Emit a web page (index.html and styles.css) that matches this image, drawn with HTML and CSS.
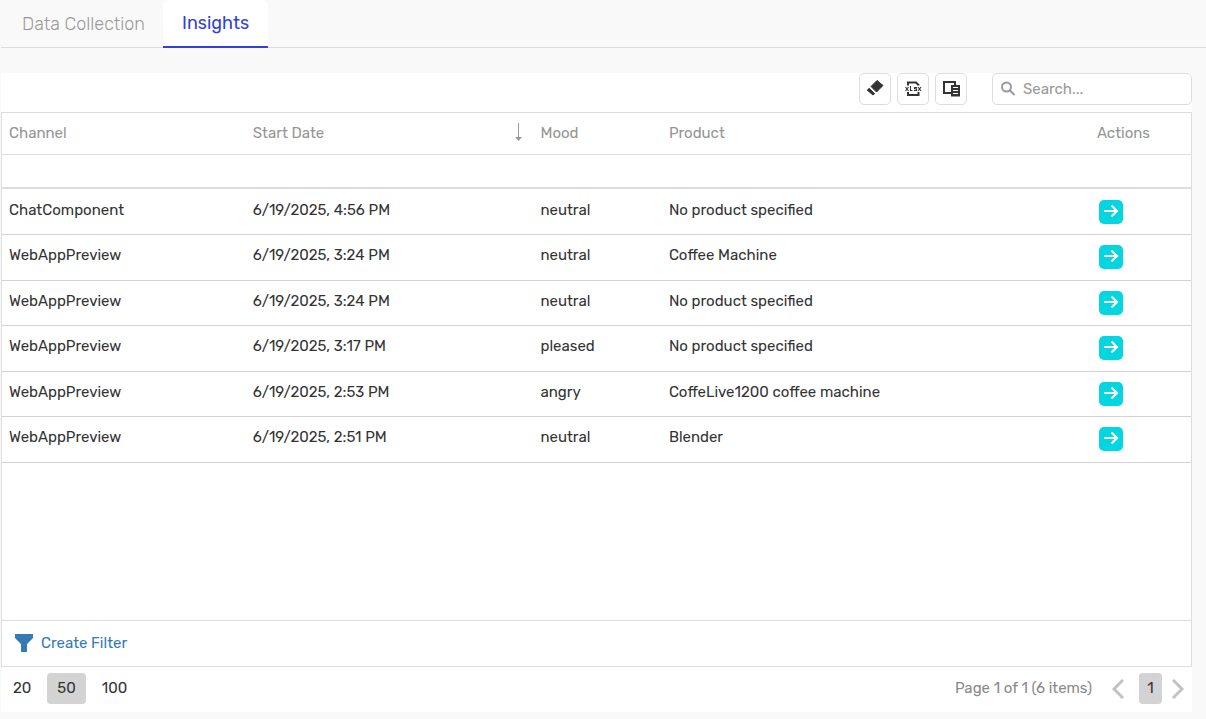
FILE: index.html
```html
<!DOCTYPE html>
<html lang="en">
<head>
<meta charset="utf-8">
<title>Insights</title>
<link rel="stylesheet" href="styles.css">
</head>
<body>
<svg class="defs" aria-hidden="true">
  <symbol id="arrow" viewBox="0 0 24 24"><path d="M5 11h13M12.500 5.500l5.500 5.500-5.500 5.500" fill="none" stroke="#fff" stroke-width="2.200"/></symbol>
</svg>
<nav class="tabs" role="tablist">
  <button class="tab" role="tab" aria-selected="false">Data Collection</button>
  <button class="tab tab-active" role="tab" aria-selected="true">Insights</button>
</nav>
<main class="card">
  <div class="toolbar">
    <button class="tool" aria-label="Clear filters"><svg width="18" height="18" viewBox="0 0 18 18" fill="#333" stroke="#333" stroke-linejoin="round"><path d="M11 0.500 17 5.500 10.500 12 5 6.500z"/><path d="M3.200 8.300 8.600 13.700 7 15 1.200 10.200z"/></svg></button>
    <button class="tool" aria-label="Export to XLSX"><svg width="18" height="18" viewBox="0 0 18 18" fill="none" stroke="#333"><path d="M4 5.500V2.500h8L14.500 5V5.500M4 12v3h10.500v-3" stroke-width="2"/><path d="M1.500 7l3 4M4.500 7l-3 4M6.500 6v4.500h2M13 7.500H10.500v1.300h2v1.700H10M14 7l3 4M17 7l-3 4" stroke-width="1.100"/></svg></button>
    <button class="tool" aria-label="Column chooser"><svg width="18" height="18" viewBox="0 0 18 18"><path d="M2 2h11v11H2z" fill="none" stroke="#333" stroke-width="2"/><path d="M9 5h9v11.500H9z" fill="#333"/><path d="M11 7.500h5M11 10.500h5M11 13.500h5" stroke="#fff"/></svg></button>
    <label class="search"><svg width="16" height="16" viewBox="0 0 16 16" fill="none" stroke="#999" stroke-width="2"><circle cx="6.500" cy="6" r="4.500"/><path d="M9.800 9.300 14.500 14"/></svg><input type="search" aria-label="Search" placeholder="Search..."></label>
  </div>
  <section class="grid">
    <div class="grid-body">
      <table>
        <colgroup><col class="c-channel"><col class="c-date"><col class="c-mood"><col class="c-product"><col class="c-actions"></colgroup>
        <thead>
          <tr class="head"><th>Channel</th><th aria-sort="descending"><div class="sorted">Start Date<svg width="9" height="20" viewBox="0 0 9 20"><path d="M4.500 0v15" stroke="#999" fill="none"/><path d="M1 14h7l-3.500 4z" fill="#999"/></svg></div></th><th>Mood</th><th>Product</th><th>Actions</th></tr>
          <tr class="filters"><td></td><td></td><td></td><td></td><td></td></tr>
        </thead>
        <tbody>
          <tr><td>ChatComponent</td><td>6/19/2025, 4:56 PM</td><td>neutral</td><td>No product specified</td><td><button class="go" aria-label="Open"><svg><use href="#arrow"/></svg></button></td></tr>
          <tr><td>WebAppPreview</td><td>6/19/2025, 3:24 PM</td><td>neutral</td><td>Coffee Machine</td><td><button class="go" aria-label="Open"><svg><use href="#arrow"/></svg></button></td></tr>
          <tr><td>WebAppPreview</td><td>6/19/2025, 3:24 PM</td><td>neutral</td><td>No product specified</td><td><button class="go" aria-label="Open"><svg><use href="#arrow"/></svg></button></td></tr>
          <tr><td>WebAppPreview</td><td>6/19/2025, 3:17 PM</td><td>pleased</td><td>No product specified</td><td><button class="go" aria-label="Open"><svg><use href="#arrow"/></svg></button></td></tr>
          <tr><td>WebAppPreview</td><td>6/19/2025, 2:53 PM</td><td>angry</td><td>CoffeLive1200 coffee machine</td><td><button class="go" aria-label="Open"><svg><use href="#arrow"/></svg></button></td></tr>
          <tr><td>WebAppPreview</td><td>6/19/2025, 2:51 PM</td><td>neutral</td><td>Blender</td><td><button class="go" aria-label="Open"><svg><use href="#arrow"/></svg></button></td></tr>
        </tbody>
      </table>
    </div>
    <div class="filter-panel">
      <button class="filter"><svg width="18" height="18" viewBox="0 0 18 18" fill="#337ab7"><path d="M0 0h18v4l-6 6v8H6v-8L0 4z"/></svg>Create Filter</button>
    </div>
  </section>
  <footer class="pager">
    <div class="sizes">
      <button class="size">20</button><button class="size selected">50</button><button class="size">100</button>
    </div>
    <div class="pages">
      <span class="info">Page 1 of 1 (6 items)</span>
      <button class="step" aria-label="Previous page" disabled><svg width="12" height="20" viewBox="0 0 12 20"><path d="M11 1 2 10l9 9"/></svg></button>
      <button class="page selected">1</button>
      <button class="step" aria-label="Next page" disabled><svg width="12" height="20" viewBox="0 0 12 20"><path d="M1 1l9 9-9 9"/></svg></button>
    </div>
  </footer>
</main>
</body>
</html>
```
FILE: styles.css
```css
* { box-sizing: border-box; }
body {
  margin: 0;
  min-height: 100vh;
  padding: 0 0 7px 1px;
  display: flex;
  flex-direction: column;
  background: #f9f9f9;
  color: #333;
  font: 15px/20px Rubik, Roboto, sans-serif;
}
button, input { font: inherit; color: inherit; }
button { border: 0; background: none; padding: 0; cursor: pointer; }
svg { display: block; flex: none; }
.defs { display: none; }

.tabs { display: flex; height: 48px; box-shadow: inset 0 -1px #ddd; }
.tab { padding: 0 18px 0 21px; font-size: 18px; font-weight: 300; color: #999; }
.tab-active {
  padding: 0 19px;
  background: #fff;
  border-bottom: 2px solid #3340d8;
  border-radius: 6px 6px 0 0;
  color: #3340d8;
  font-weight: 400;
}

.card {
  flex: 1;
  display: flex;
  flex-direction: column;
  margin: 25px 14px 0 0;
  background: #fff;
}
.toolbar { display: flex; justify-content: flex-end; gap: 6px; padding-bottom: 7px; }
.tool {
  display: grid;
  place-items: center;
  width: 32px;
  height: 32px;
  border: 1px solid #ddd;
  border-radius: 5px;
  background: #fff;
}
.search {
  display: flex;
  align-items: center;
  gap: 7px;
  width: 200px;
  height: 32px;
  margin-left: 19px;
  padding: 0 7px;
  border: 1px solid #ddd;
  border-radius: 5px;
}
.search input { flex: 1; min-width: 0; padding: 0; border: 0; outline: 0; background: none; }
.search input::placeholder { color: #999; opacity: 1; }

.grid { flex: 1; display: flex; flex-direction: column; border: 1px solid #ddd; }
.grid-body { flex: 1; }
table { width: 100%; table-layout: fixed; border-collapse: separate; border-spacing: 0; }
.c-channel { width: 20.5%; }
.c-date { width: 24.2%; }
.c-mood { width: 10.8%; }
.c-product { width: 36%; }
.c-actions { width: 8.5%; }
th, td { padding: 0 7px; border-bottom: 1px solid #ddd; text-align: left; }
th { height: 42px; padding-bottom: 2px; font-weight: 400; color: #959595; }
.sorted { display: flex; justify-content: space-between; align-items: center; padding-right: 3px; }
.filters td { height: 34px; border-bottom-width: 2px; }
tbody td { height: 46px; padding-top: 10px; vertical-align: top; border-color: #d3d3d3; }
tbody tr:first-child td { padding-top: 11px; }
tbody tr:nth-child(2n+3) td { height: 45px; }
.go {
  display: block;
  margin-left: 2px;
  width: 24px;
  height: 24px;
  border-radius: 5px;
  background: #03d6e0;
}
.go svg { width: 24px; height: 24px; }
.filter-panel { padding: 12px 13px 13px; border-top: 1px solid #ddd; }
.filter { display: flex; align-items: center; gap: 8px; color: #337ab7; }

.pager { display: flex; justify-content: space-between; padding: 6px 8px 8px 2px; }
.sizes, .pages { display: flex; align-items: center; }
.sizes { gap: 6px; }
.size { height: 31px; padding: 0 10px 2px; border-radius: 4px; }
.selected { background: #d3d3d3; border-radius: 4px; }
.info { margin-right: 20px; padding-bottom: 2px; color: #8a8a8a; }
.page { width: 23px; height: 31px; margin: 0 10px 0 15px; padding-bottom: 2px; }
.step path { fill: none; stroke: #c2c2c2; stroke-width: 3; }
```
